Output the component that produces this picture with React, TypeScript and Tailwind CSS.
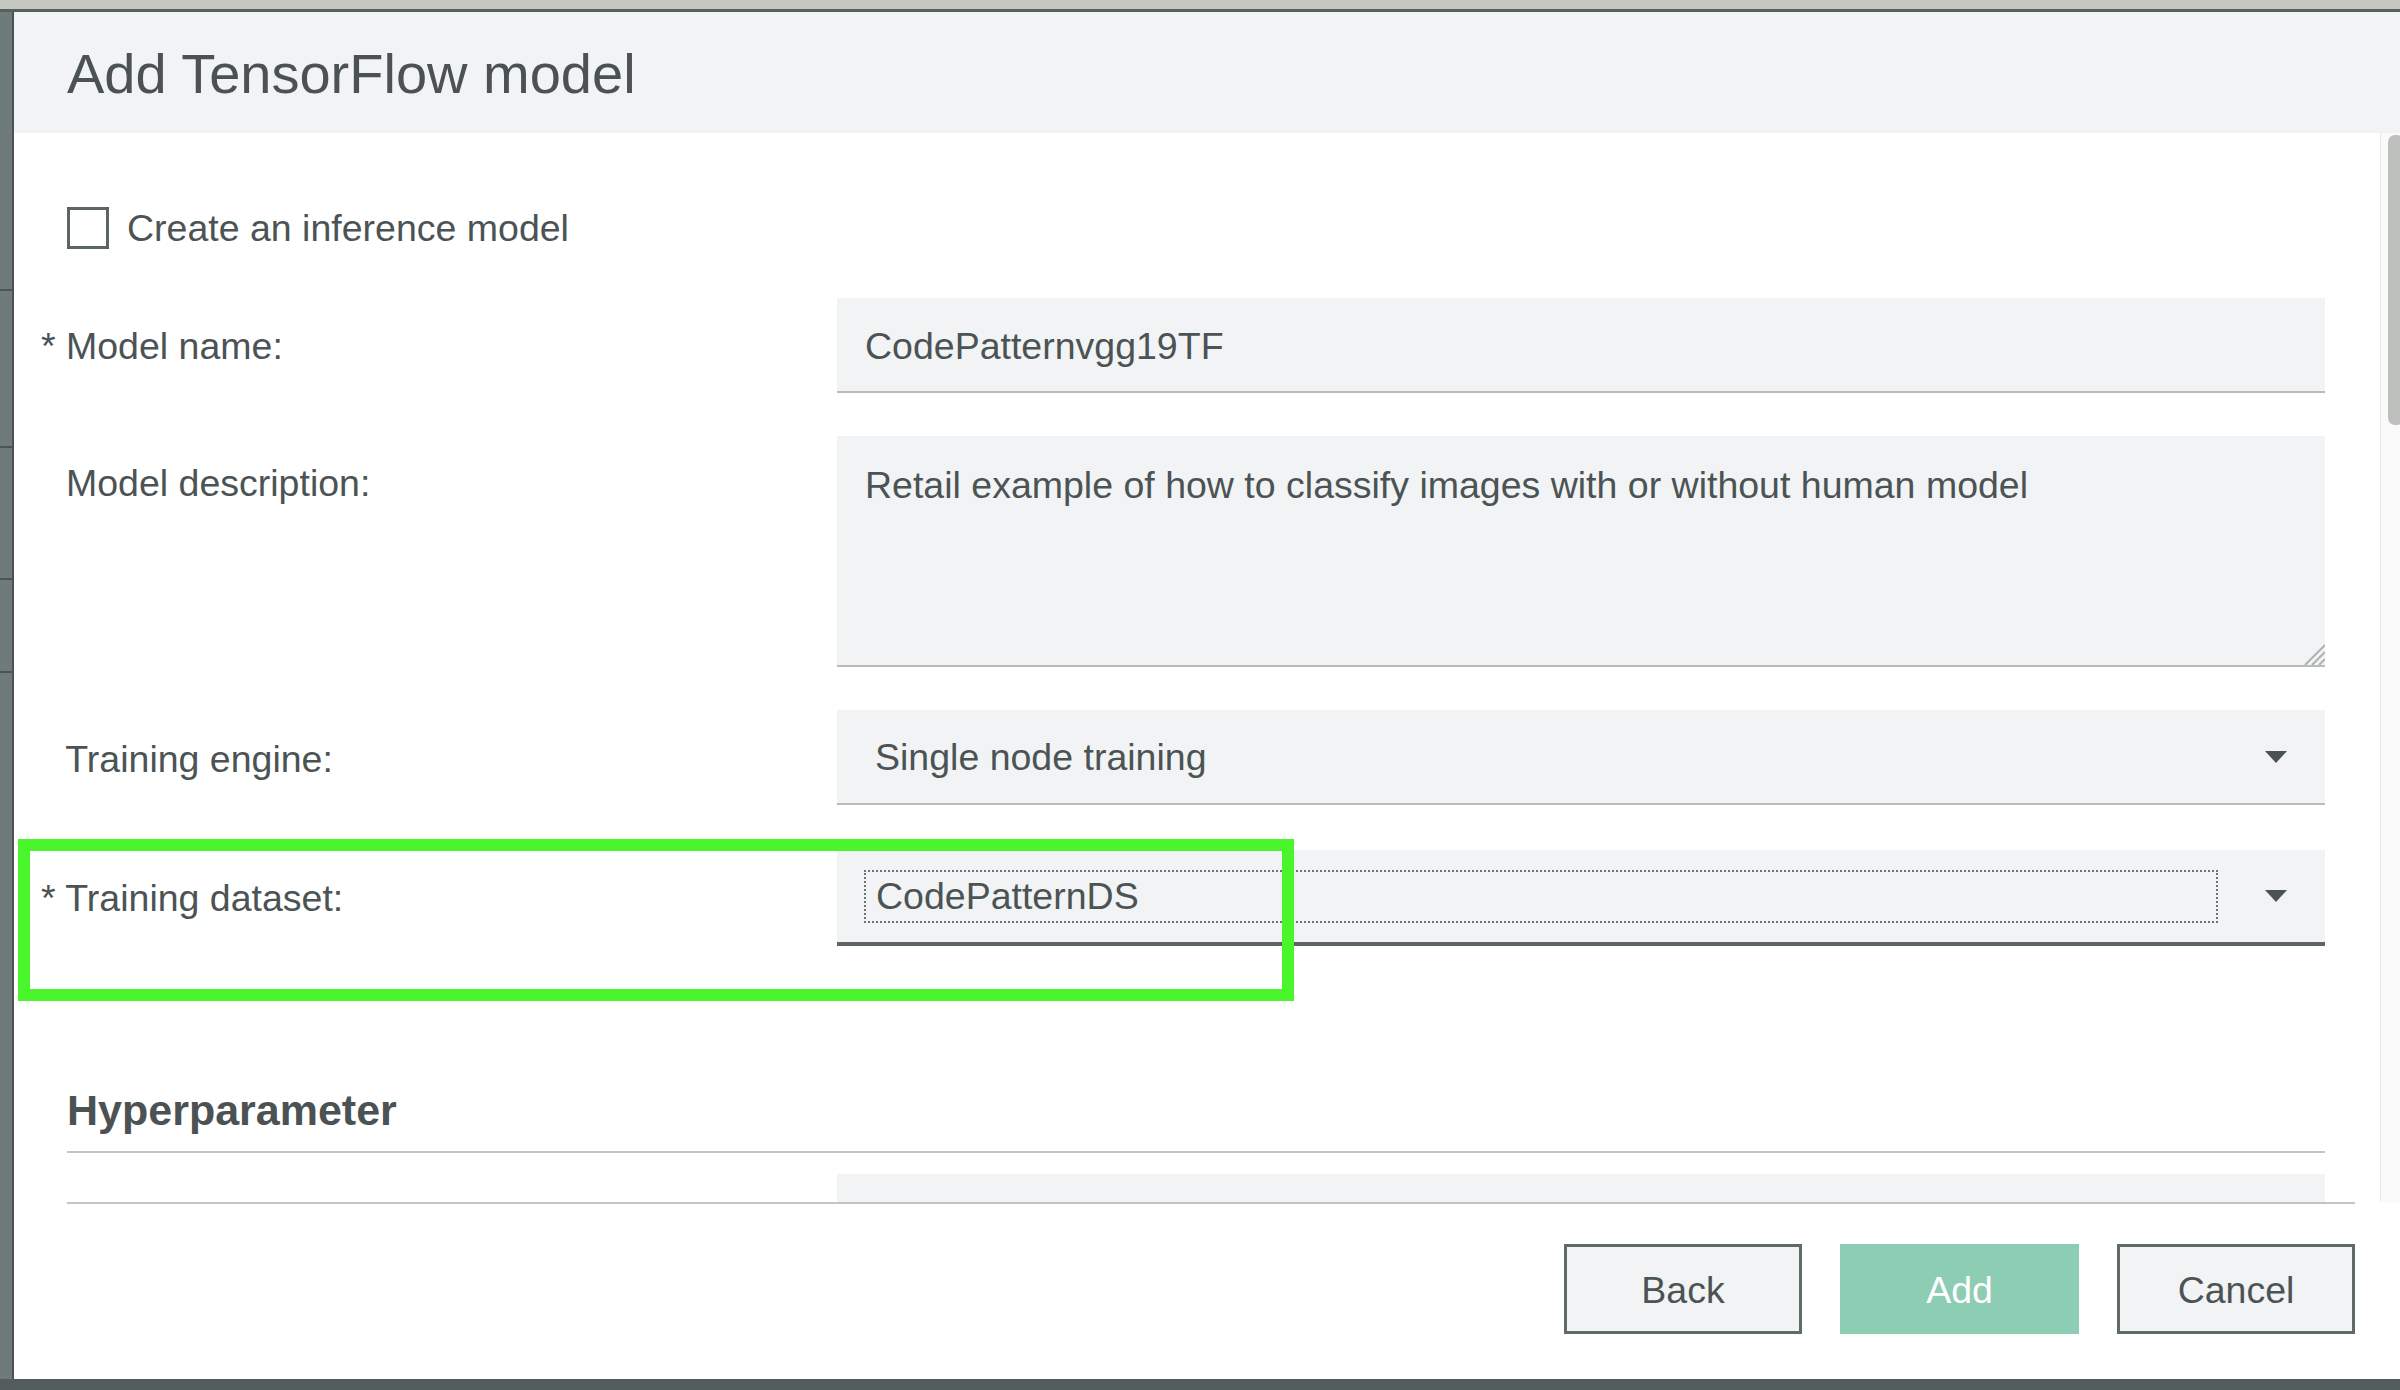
import React from "react";

function Caret() {
  return (
    <svg width="22" height="12" viewBox="0 0 22 12" className="shrink-0">
      <polygon points="0,0 22,0 11,12" fill="#4a5254" />
    </svg>
  );
}

function Grip() {
  return (
    <svg width="22" height="22" viewBox="0 0 22 22" className="absolute right-0 bottom-0">
      <line x1="22" y1="2" x2="2" y2="22" stroke="#aeb3ae" strokeWidth="2" />
      <line x1="22" y1="9" x2="9" y2="22" stroke="#aeb3ae" strokeWidth="2" />
      <line x1="22" y1="16" x2="16" y2="22" stroke="#aeb3ae" strokeWidth="2" />
    </svg>
  );
}

function Label({ text, required }: { text: string; required?: boolean }) {
  return (
    <div className="whitespace-nowrap">
      <span className={required ? "" : "invisible"}>* </span>
      {text}
    </div>
  );
}

export default function App() {
  return (
    <div
      className="relative w-[2400px] h-[1390px] overflow-hidden bg-[#6f7b7a] text-[#4b5355] flex flex-col"
      style={{ fontFamily: '"Liberation Sans", Arial, Helvetica, sans-serif' }}
    >
      {/* top strip of underlying page */}
      <div className="h-[9px] bg-[#c6c7c1] shrink-0" />
      <div className="h-[3px] bg-[#56605f] shrink-0" />

      <div className="flex flex-1 min-h-0">
        {/* left strip of underlying page */}
        <div className="w-[12px] shrink-0 bg-[#6f7b7a] flex flex-col">
          <div className="h-[277px]" />
          <div className="h-[2px] bg-[#4b5454]" />
          <div className="h-[155px]" />
          <div className="h-[2px] bg-[#4b5454]" />
          <div className="h-[130px]" />
          <div className="h-[2px] bg-[#4b5454]" />
          <div className="h-[91px]" />
          <div className="h-[2px] bg-[#4b5454]" />
        </div>
        <div className="w-[2px] shrink-0 bg-[#4b5454]" />

        {/* dialog */}
        <div className="flex-1 flex flex-col bg-white h-[1367px]">
          {/* header */}
          <div className="h-[121px] shrink-0 bg-[#f2f3f4] flex items-center pl-[53px] pt-[2px]">
            <h1 className="text-[56px] leading-none text-[#4a5253]">
              Add TensorFlow model
            </h1>
          </div>

          {/* scrolling body */}
          <div className="h-[1069px] shrink-0 flex overflow-hidden">
            <div className="flex-1 pl-[27px] pr-[55px] pt-[74px] text-[37.5px] leading-[44px] flex flex-col">
              {/* checkbox row */}
              <div className="ml-[26px] h-[42px] flex items-center gap-[18px] shrink-0">
                <div className="w-[42px] h-[42px] border-[3px] border-[#5b6566] bg-white" />
                <span>Create an inference model</span>
              </div>

              {/* model name */}
              <div className="mt-[49px] grid grid-cols-[796px_1fr] shrink-0">
                <div className="flex items-center h-[95px]">
                  <Label text="Model name:" required />
                </div>
                <div className="h-[95px] bg-[#f2f3f4] border-b-2 border-[#b9bcb9] flex items-center pl-[28px] pt-[2px]">
                  CodePatternvgg19TF
                </div>
              </div>

              {/* description */}
              <div className="mt-[43px] grid grid-cols-[796px_1fr] shrink-0">
                <div className="pt-[25px]">
                  <Label text="Model description:" />
                </div>
                <div className="relative h-[231px] bg-[#f2f3f4] border-b-2 border-[#b9bcb9] pl-[28px] pt-[27px]">
                  Retail example of how to classify images with or without human model
                  <Grip />
                </div>
              </div>

              {/* training engine */}
              <div className="mt-[43px] grid grid-cols-[796px_1fr] shrink-0">
                <div className="flex items-center h-[95px] pt-[2px]">
                  <Label text="Training engine:" />
                </div>
                <div className="h-[95px] bg-[#f2f3f4] border-b-2 border-[#b9bcb9] flex items-center justify-between pl-[38px] pr-[38px]">
                  <span>Single node training</span>
                  <Caret />
                </div>
              </div>

              {/* training dataset */}
              <div className="mt-[45px] grid grid-cols-[796px_1fr] shrink-0">
                <div className="flex items-center h-[96px]">
                  <Label text="Training dataset:" required />
                </div>
                <div className="h-[96px] bg-[#f2f3f4] border-b-4 border-[#5b6566] flex items-center pl-[27px] pr-[38px]">
                  <div className="flex-1 h-[53px] border-2 border-dotted border-[#6a7374] flex items-center pl-[10px] mr-[47px]">
                    CodePatternDS
                  </div>
                  <Caret />
                </div>
              </div>

              {/* hyperparameter heading */}
              <div className="mt-[143px] ml-[26px] pb-[20px] border-b-2 border-[#c3c5c3] shrink-0">
                <h2 className="text-[43px] leading-[42px] font-bold text-[#4a5253]">
                  Hyperparameter
                </h2>
              </div>

              {/* next row (clipped) */}
              <div className="mt-[21px] grid grid-cols-[796px_1fr] shrink-0">
                <div className="h-[95px]" />
                <div className="h-[95px] bg-[#f2f3f4]" />
              </div>
            </div>

            {/* scrollbar */}
            <div className="w-[20px] shrink-0 bg-[#fafafa] border-l border-dotted border-[#dcdedc] pl-[7px] pt-[2px]">
              <div className="w-[16px] h-[290px] rounded-[7px] bg-[#bdc0bd]" />
            </div>
          </div>

          {/* footer */}
          <div className="shrink-0 ml-[53px] mr-[45px] border-t-2 border-[#c3c5c3] pt-[40px] pb-[45px] flex justify-end gap-[38px] text-[37.5px]">
            <button className="w-[238px] h-[90px] border-[3px] border-[#5f6a69] bg-[#f2f3f4] text-[#4b5355] pt-[3px]">
              Back
            </button>
            <button className="w-[239px] h-[90px] bg-[#8dcdb4] text-white pt-[3px]">Add</button>
            <button className="w-[238px] h-[90px] border-[3px] border-[#5f6a69] bg-[#f2f3f4] text-[#4b5355] pt-[3px]">
              Cancel
            </button>
          </div>
        </div>
      </div>

      {/* bottom strip */}
      <div className="h-[11px] shrink-0 bg-[#535c5d]" />

      {/* green annotation highlight */}
      <div className="absolute left-[18px] top-[839px] w-[1276px] h-[162px] border-[12px] border-[#4af52b] pointer-events-none" />
    </div>
  );
}
